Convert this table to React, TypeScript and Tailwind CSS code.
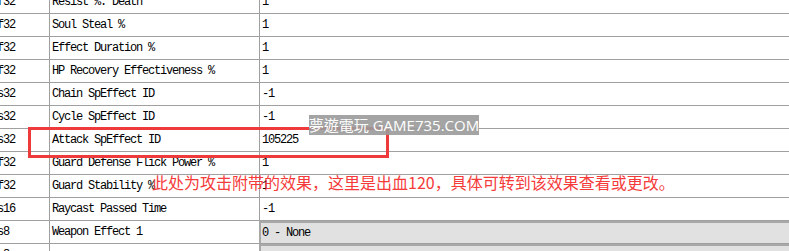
const rows: { t: string; name: string; value: string; gray?: boolean }[] = [
  { t: "f32", name: "Resist %: Death", value: "1" },
  { t: "f32", name: "Soul Steal %", value: "1" },
  { t: "f32", name: "Effect Duration %", value: "1" },
  { t: "f32", name: "HP Recovery Effectiveness %", value: "1" },
  { t: "s32", name: "Chain SpEffect ID", value: "-1" },
  { t: "s32", name: "Cycle SpEffect ID", value: "-1" },
  { t: "s32", name: "Attack SpEffect ID", value: "105225" },
  { t: "f32", name: "Guard Defense Flick Power %", value: "1" },
  { t: "f32", name: "Guard Stability %", value: "1" },
  { t: "s16", name: "Raycast Passed Time", value: "-1" },
  { t: "s8", name: "Weapon Effect 1", value: "0 - None", gray: true },
  { t: "s8", name: "", value: "", gray: true },
];

export default function App() {
  return (
    <div className="relative w-[789px] h-[251px] overflow-hidden bg-white text-black">
      <div
        className="mt-[-9px] text-[12px] tracking-[-1.2px]"
        style={{ fontFamily: '"Liberation Mono", "DejaVu Sans Mono", monospace' }}
      >
        {rows.map((r, i) => (
          <div key={i} className="flex h-[23px] border-b border-[#a0a0a0]">
            <div className="w-[50px] border-r border-[#a0a0a0] flex items-center">
              <span className="ml-[-3px]">{r.t}</span>
            </div>
            <div className="w-[210px] border-r border-[#a0a0a0] flex items-center pl-[2px]">
              {r.name}
            </div>
            {r.gray ? (
              <div className="flex-1 flex items-center pl-[1px] bg-[#e1e1e1] border-l-2 border-t-2 border-[#a8a8a8] ml-[-1px]">
                {r.value}
              </div>
            ) : (
              <div className="flex-1 flex items-center pl-[2px]">{r.value}</div>
            )}
          </div>
        ))}
      </div>

      <div className="absolute left-[28px] top-[127px] w-[361px] h-[31px] border-[3px] border-[#ee3a3a]" />

      <div
        className="absolute left-[309px] top-[115px] h-[20px] w-[170px] bg-[#9a9a9a]/90 text-white text-[15px] leading-[20px] whitespace-nowrap flex items-center justify-center"
        style={{ fontFamily: '"Open Sans", "Noto Sans CJK TC", sans-serif' }}
      >
        夢遊電玩 GAME735.COM
      </div>

      <div
        className="absolute left-[152px] top-[172px] text-[16px] leading-[20px] text-[#f53a3a] whitespace-nowrap"
        style={{ fontFamily: '"Noto Sans CJK SC", sans-serif' }}
      >
        此处为攻击附带的效果，这里是出血120，具体可转到该效果查看或更改。
      </div>
    </div>
  );
}
